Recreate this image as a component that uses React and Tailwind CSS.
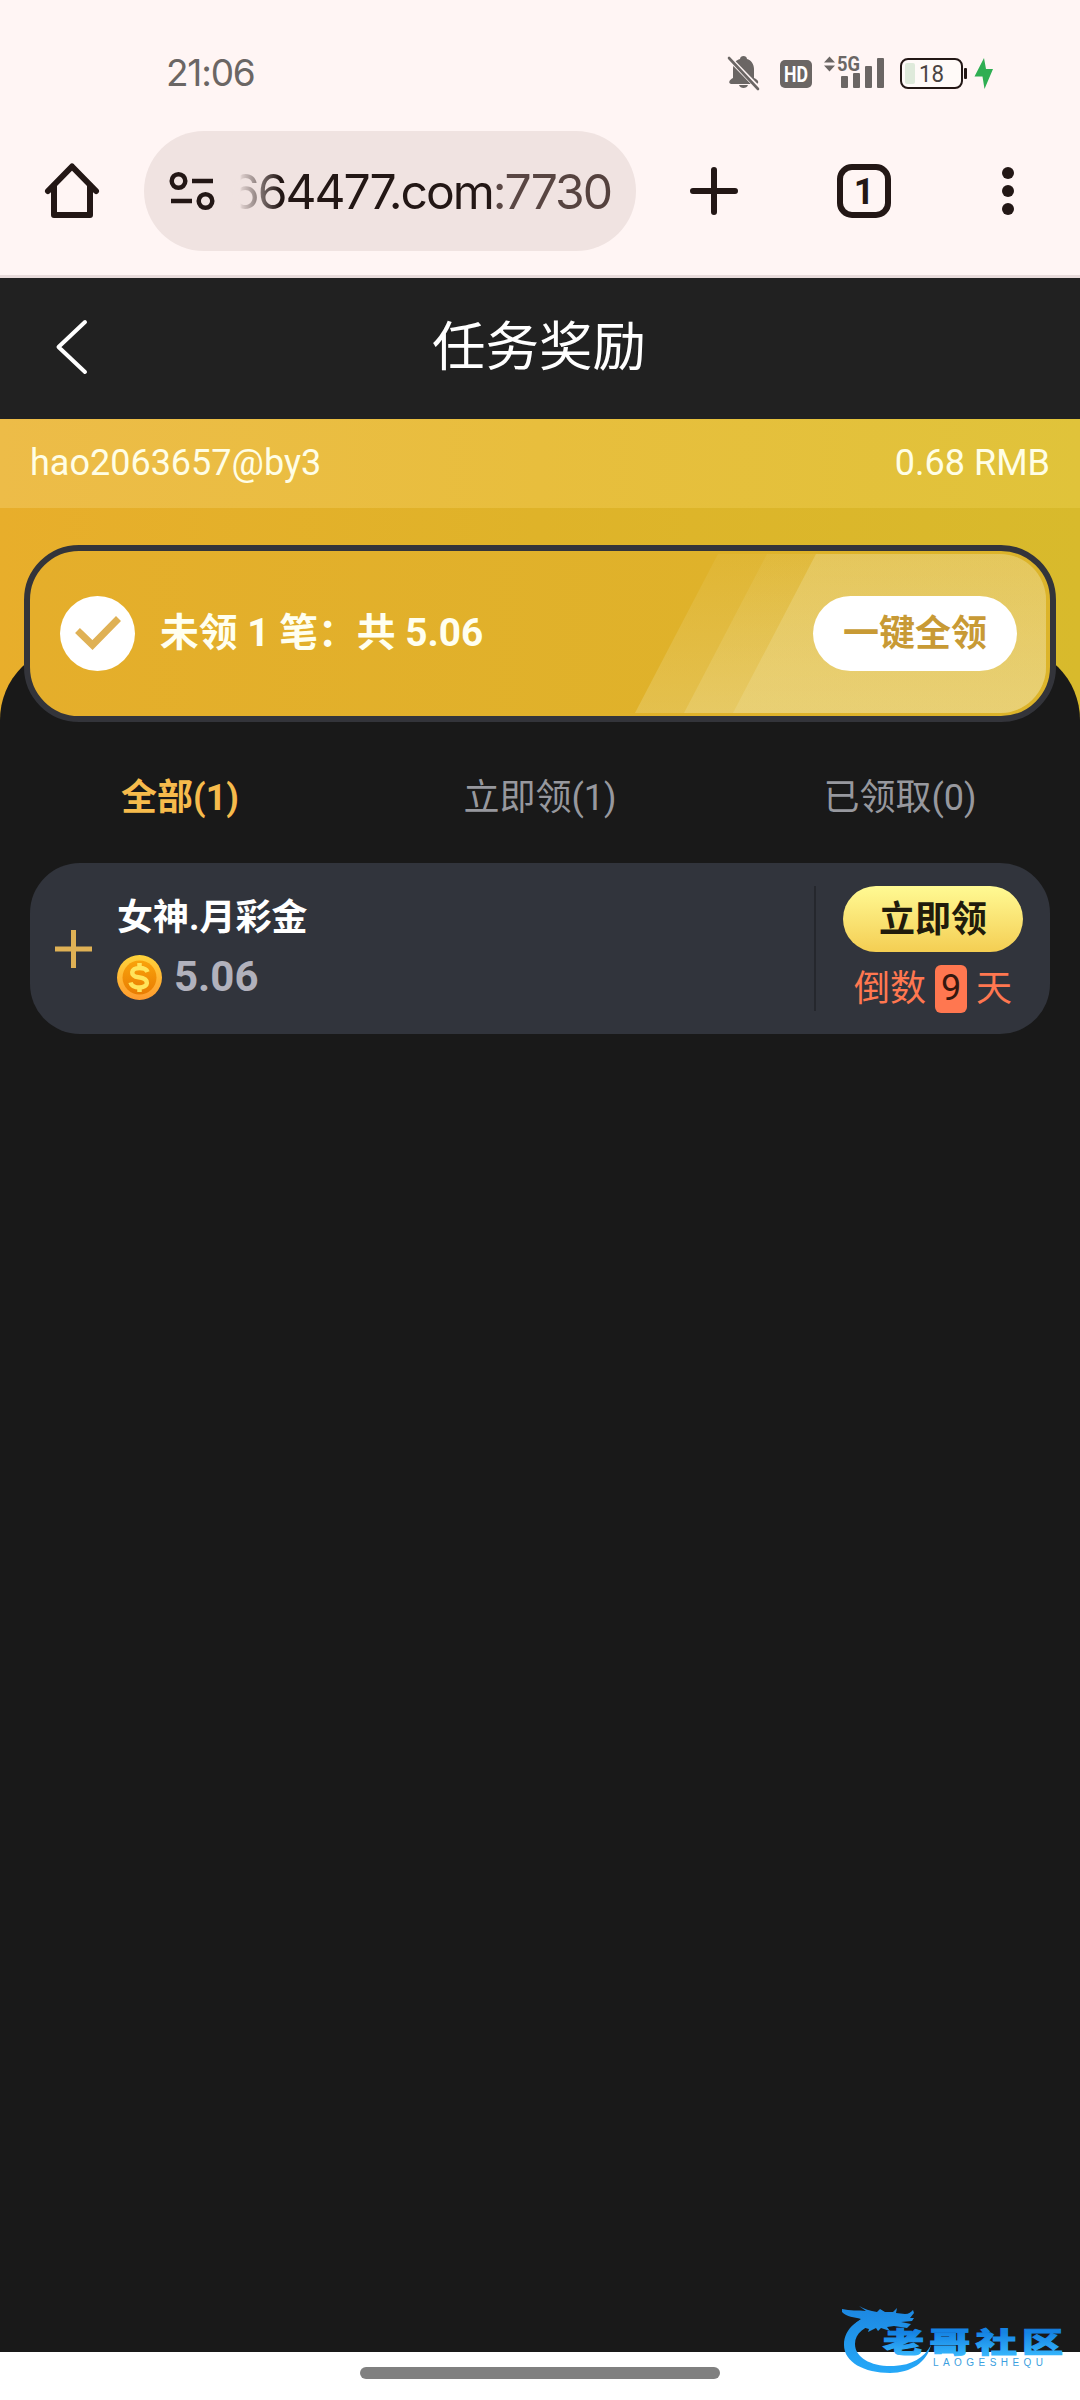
import { clsx } from "clsx";

const TABS = [
  { key: "all", label: "全部(1)" },
  { key: "ready", label: "立即领(1)" },
  { key: "done", label: "已领取(0)" },
];

function StatusBar() {
  return (
    <div className="flex h-[131px] items-start justify-between pl-[166px] pr-[87px] pt-[45px] text-[#6b6664]">
      <div className="mt-[10px] font-['Inter','Noto_Sans_CJK_SC',sans-serif] text-[37px] leading-9 tracking-[-1.2px]">21:06</div>
      <svg width="267" height="46" viewBox="726 44 267 46" fill="#6b6664">
        <path d="M731 83c-3-1-2-4 2-6v-9c0-6 3-9 7-10 0-4 7-4 7 0 4 1 7 5 7 10v9c5 2 5 5 3 6zM739 84h9c-1 4-8 4-9 0z" />
        <path d="M727 55l33 34" stroke="#fff5f4" strokeWidth="5" />
        <path d="M729 57l29 31" stroke="#6b6664" strokeWidth="2.6" strokeLinecap="round" />
        <rect x="780" y="59" width="32" height="28" rx="5" />
        <text x="796" y="81" fill="#fff" fontSize="22" fontWeight="700" textAnchor="middle" textLength="24" lengthAdjust="spacingAndGlyphs" fontFamily="Roboto, sans-serif">HD</text>
        <path d="M829.500 55.500l5.500 6h-11zM829.500 70.500l-5.500-6h11z" />
        <text x="837" y="70" fontSize="21" fontWeight="700" textLength="23" lengthAdjust="spacingAndGlyphs" fontFamily="Roboto, sans-serif">5G</text>
        <rect x="841" y="75" width="7" height="12" rx="1" />
        <rect x="853" y="72" width="7" height="15" rx="1" />
        <rect x="865" y="65" width="7" height="22" rx="1" />
        <rect x="877" y="57" width="7" height="30" rx="1" />
        <rect x="901" y="58" width="61" height="29" rx="7" fill="#fffaf8" stroke="#231715" strokeWidth="2" />
        <rect x="905" y="62" width="10" height="21" rx="2" fill="#dfeadb" />
        <rect x="964" y="67" width="3" height="11" rx="1" fill="#231715" />
        <text x="931.500" y="81" fill="#4a4442" fontSize="23" textAnchor="middle" textLength="25" lengthAdjust="spacingAndGlyphs" fontFamily="Roboto, sans-serif">18</text>
        <path d="M984 57l-9.500 18.500h8l2 12.500 8.500-20h-7z" fill="#2fae52" />
      </svg>
    </div>
  );
}

function BrowserBar() {
  return (
    <div className="flex h-[144px] items-start">
      <svg className="ml-[42px] mt-[29px] shrink-0" width="60" height="60" viewBox="42 160 60 60" fill="none" stroke="#231715" strokeWidth="6" strokeLinecap="round" strokeLinejoin="round">
        <path d="M48 191l24-24.500L96 191" />
        <path d="M54 186v29h36v-29" />
      </svg>
      <div className="ml-[42px] flex h-[120px] w-[492px] shrink-0 items-center justify-between rounded-full bg-[#f0e3e1] pl-6 pr-[25px]">
        <svg className="shrink-0" width="50" height="44" viewBox="168 169 50 44" fill="none" stroke="#231715" strokeWidth="4.500">
          <circle cx="178.500" cy="181" r="6.800" />
          <path d="M192 181h21M171 201h21" />
          <circle cx="205.500" cy="201" r="6.800" />
        </svg>
        <div className="mt-px whitespace-nowrap bg-[linear-gradient(90deg,#f0e3e1_0,#f0e3e1_10px,#d9cbc9_12px,#231715_50px,#231715_262px,#5b4845_268px,#54413d_100%)] bg-clip-text font-['Inter','Noto_Sans_CJK_SC',sans-serif] text-[48px] leading-[62px] tracking-[-2px] text-transparent">
          664477.com:7730
        </div>
      </div>
      <svg className="ml-[51px] mt-[29px] shrink-0" width="335" height="62" viewBox="687 160 335 62" fill="none" stroke="#231715" strokeWidth="6" strokeLinecap="round">
        <path d="M693 191h42M714 170v42" />
        <rect x="840" y="167" width="48" height="48" rx="12" />
        <text x="864" y="204" fill="#231715" stroke="none" fontSize="36" fontWeight="700" textAnchor="middle" fontFamily="Roboto, sans-serif">1</text>
        <g fill="#231715" stroke="none">
          <circle cx="1008" cy="173" r="6" />
          <circle cx="1008" cy="191" r="6" />
          <circle cx="1008" cy="209" r="6" />
        </g>
      </svg>
    </div>
  );
}

function Header() {
  return (
    <header className="grid h-[141px] grid-cols-[120px_1fr_120px] items-center bg-[#212121]">
      <svg className="-mt-1 ml-[53px]" width="36" height="60" viewBox="54 317 36 60" fill="none" stroke="#fff" strokeWidth="4" strokeLinecap="round" strokeLinejoin="round">
        <path d="M86 322L59.500 347 86 372" />
      </svg>
      <h1 className="-ml-0.5 text-center text-[53.500px]">任务奖励</h1>
    </header>
  );
}

function ClaimAll() {
  return (
    <div className="relative mx-6 flex h-[177px] items-center justify-between overflow-hidden rounded-[55px] border-6 border-[#33343a] bg-[linear-gradient(90deg,#e5ae2b,#dcb42a)] pl-[30px] pr-[33px]">
      <svg className="absolute right-0 top-0" width="415" height="165" viewBox="635 551 415 165">
        <defs>
          <linearGradient id="stripe" x1="0" y1="0" x2="0" y2="1">
            <stop offset="0" stopColor="#ecd98c" stopOpacity="0.1" />
            <stop offset="1" stopColor="#ecd98c" stopOpacity="0.36" />
          </linearGradient>
          <linearGradient id="shine" x1="0" y1="0" x2="0" y2="1">
            <stop offset="0" stopColor="#ecd98c" stopOpacity="0.4" />
            <stop offset="1" stopColor="#ecd98c" stopOpacity="0.4" />
          </linearGradient>
        </defs>
        <path d="M718 554H1000a46 46 0 0 1 46 46V667a46 46 0 0 1-46 46H635z" fill="url(#stripe)" />
        <path d="M767 554H1000a46 46 0 0 1 46 46V667a46 46 0 0 1-46 46H684z" fill="url(#stripe)" />
        <path d="M816 554H1000a46 46 0 0 1 46 46V667a46 46 0 0 1-46 46H733z" fill="url(#shine)" />
      </svg>
      <div className="flex items-center">
        <svg width="75" height="75" viewBox="0 0 75 75">
          <circle cx="37.500" cy="37.500" r="37.500" fill="#fff" />
          <path d="M17.500 34.500L32.500 49l26-26.500" fill="none" stroke="#dfb155" strokeWidth="7" />
        </svg>
        <div className="ml-[25px] whitespace-pre text-[38.800px] font-bold text-[#fffff0]">未领 1 笔：共 5.06</div>
      </div>
      <button className="relative h-[75px] w-[204px] rounded-full bg-white text-[36px] font-bold text-[#c89a35]">一键全领</button>
    </div>
  );
}

function Coin() {
  return (
    <svg width="45" height="45" viewBox="0 0 45 45">
      <defs>
        <linearGradient id="rim" x1="0" y1="0" x2="0" y2="1">
          <stop offset="0" stopColor="#ffd43b" />
          <stop offset="1" stopColor="#ff9a2e" />
        </linearGradient>
        <linearGradient id="face" x1="0" y1="0" x2="0" y2="1">
          <stop offset="0" stopColor="#f9a30b" />
          <stop offset="1" stopColor="#e97c02" />
        </linearGradient>
      </defs>
      <circle cx="22.500" cy="22.500" r="22.500" fill="url(#rim)" />
      <circle cx="22.500" cy="22.500" r="17" fill="url(#face)" />
      <path d="M30.500 17c-1-3-4-4-8-4-9 0-10 8-1 9.300 12 1.700 10 10.200 1 10.200-5 0-8-1.500-9-5M22.500 8v5M22.500 32v5" fill="none" stroke="#ffe45c" strokeWidth="4.500" />
    </svg>
  );
}

function RewardItem() {
  return (
    <div className="mx-[30px] flex h-[171px] rounded-[50px] bg-[#31343c]">
      <svg className="ml-[25px] mt-[67px]" width="37" height="38" viewBox="0 0 37 38" stroke="#dfb155" strokeWidth="5">
        <path d="M0 19h37M18.500 0v38" />
      </svg>
      <div className="ml-[25px] flex-1 pt-[30px]">
        <div className="text-[36px] font-bold leading-[50px] text-white">女神.月彩金</div>
        <div className="mt-[9px] flex items-center">
          <Coin />
          <span className="ml-3 text-[42px] font-bold leading-[50px] text-[#b1b1bc]">5.06</span>
        </div>
      </div>
      <div className="mt-[23px] h-[125px] w-[2px] bg-[#25272d]" />
      <div className="flex w-[234px] flex-col items-center pt-[23px]">
        <button className="h-[66px] w-[180px] rounded-full bg-gradient-to-b from-[#fffa93] to-[#f4ce52] pt-0.5 text-[36px] font-bold leading-none text-[#211b0c]">立即领</button>
        <div className="mt-3 flex items-center text-[36px] leading-[50px] text-[#ff7750]">
          <span>倒数</span>
          <span className="mx-[9px] h-[48px] w-8 rounded-[6px] bg-[#ff7750] text-center leading-[47px] text-[#35180f]">9</span>
          <span>天</span>
        </div>
      </div>
    </div>
  );
}

function Watermark() {
  return (
    <svg className="absolute bottom-5 left-[840px]" width="225" height="80" viewBox="840 2300 225 80">
      <defs>
        <linearGradient id="wm" x1="0" y1="2305" x2="0" y2="2372" gradientUnits="userSpaceOnUse">
          <stop offset="0" stopColor="#1c86e0" />
          <stop offset="1" stopColor="#25a8f8" />
        </linearGradient>
        <linearGradient id="wmText" x1="0" y1="0" x2="0" y2="1">
          <stop offset="0.300" stopColor="#1583e4" />
          <stop offset="0.850" stopColor="#35b4fb" />
        </linearGradient>
      </defs>
      {/* Dragon: body sweep, then head with whiskers and horns */}
      <path fill="url(#wm)" d="M881 2314c-22 2-37 14-37 31 0 17 20 28 46 28 21 0 37-11 41-28-7 13-19 20-37 21-22 1-39-8-39-22 0-11 10-18 24-21z" />
      <path fill="url(#wm)" d="M842 2309c8 2 16 1 24 2l-7-5c5 3 11 5 18 6l3-3 5 3h8l4-4-1 5 9 1c4 0 6-2 8-4l1 3-4 5h4l-2 3-11 1 10 2-4 4-13-2-7 1 3 4-9-3-3 3-2-3-8 4 1-3-7-2-6-4 5-4c-7-2-14-2-19-7z" />
      <text x="883" y="2353" fill="url(#wmText)" stroke="url(#wmText)" strokeWidth="1.400" fontSize="41" fontWeight="900" textLength="180" fontFamily="'Noto Sans CJK SC', sans-serif" transform="translate(0 753) scale(1 0.680)">老哥社区</text>
      <text x="933" y="2366" fill="#3c9fe0" fontSize="10" textLength="110" fontFamily="'Liberation Sans', sans-serif">LAOGESHEQU</text>
    </svg>
  );
}

export default function App() {
  const activeTab = "all";

  return (
    <div className="relative flex h-[2400px] w-[1080px] flex-col overflow-hidden bg-white font-['Roboto','Noto_Sans_CJK_SC',sans-serif] text-white">
      <div className="h-[278px] shrink-0 border-b-3 border-[#e8dbdb] bg-[#fff5f4]">
        <StatusBar />
        <BrowserBar />
      </div>
      <Header />

      <main className="flex-1 bg-[#191919]">
        {/* Account strip and the gold backdrop behind the claim card */}
        <div className="h-[303px] bg-[linear-gradient(90deg,#e8ae2b,#dfb329_50%,#d8ba2c)]">
          <div className="flex h-[89px] items-center justify-between bg-[linear-gradient(90deg,#edbc48,#e8be3d_50%,#e0c33a)] px-[30px] pb-0.5 text-[36px] text-[#fffee6]">
            <span>hao2063657@by3</span>
            <span>0.68 RMB</span>
          </div>
          <div className="h-[137px]" />
          <div className="h-[77px] rounded-t-[75px] bg-[#191919]" />
        </div>
        <div className="-mt-[177px]">
          <ClaimAll />
        </div>

        <div className="grid h-[141px] grid-cols-3 items-center pt-[11px] text-center text-[36px]">
          {TABS.map((tab) => (
            <div
              key={tab.key}
              className={clsx(tab.key === activeTab ? "font-bold text-[#f6bb4c]" : "text-[#97989e]")}
            >
              {tab.label}
            </div>
          ))}
        </div>

        <RewardItem />
      </main>

      {/* Android gesture bar */}
      <div className="flex h-12 shrink-0 justify-center bg-white pt-[15px]">
        <div className="h-3 w-[360px] rounded-full bg-[#808080]" />
      </div>
      <Watermark />
    </div>
  );
}
